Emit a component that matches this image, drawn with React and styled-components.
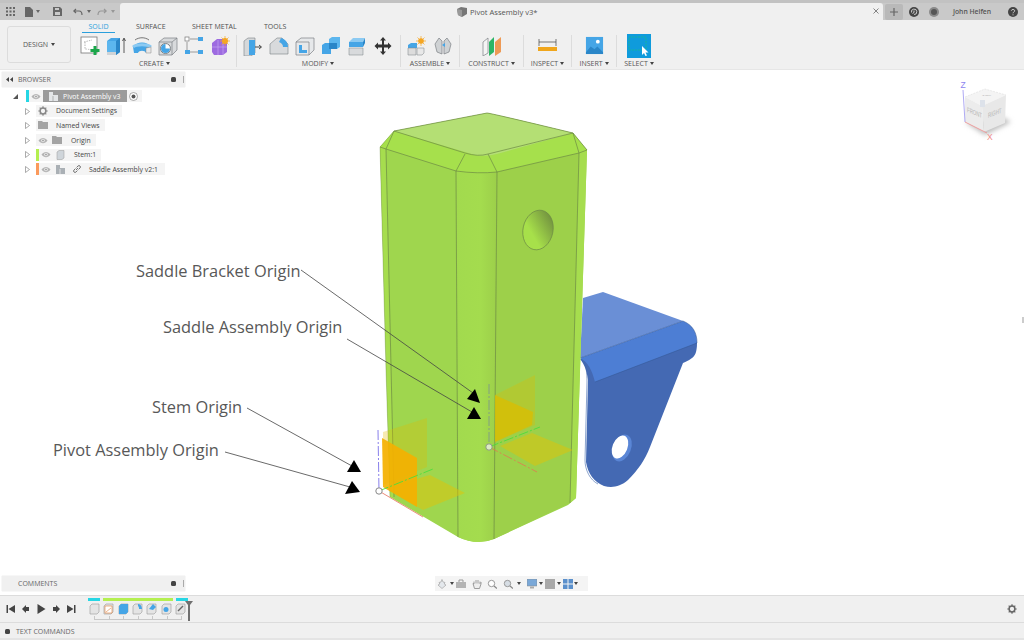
import React from 'react';
import styled, { createGlobalStyle } from 'styled-components';

const Global = createGlobalStyle`
  html, body { margin: 0; padding: 0; width: 1024px; height: 640px; overflow: hidden; background: #fff; }
  * { box-sizing: border-box; }
  body { font-family: "Open Sans", "Liberation Sans", sans-serif; color: #555; }
`;

const Page = styled.div`
  width: 1024px; height: 640px; display: flex; flex-direction: column; overflow: hidden;
`;

/* ---------- title bar ---------- */
const TitleBar = styled.header`
  height: 20px; background: #c9c9c9; border-top: 3px solid #c2c2c2; display: flex; align-items: stretch; flex: none;
`;
const QuickTools = styled.div`
  width: 120px; display: flex; align-items: center; padding-left: 5px; color: #666;
`;
const QuickBtn = styled.span`
  display: inline-flex; align-items: center; justify-content: center; width: ${p => p.$w || 12}px; margin-right: ${p => p.$mr || 0}px; opacity: ${p => p.$dim ? .5 : 1};
`;
const DocTab = styled.div`
  width: 763px; background: #f0f0f0; border-radius: 3px 3px 0 0; display: flex; align-items: center; position: relative; padding-left: 337px; font-size: 7.6px; color: #555; gap: 3px;
`;
const CloseTab = styled.span`
  position: absolute; right: 3px; top: 3px; width: 8px; height: 10px; display: flex; align-items: center; justify-content: center;
`;
const TopRight = styled.div`
  flex: 1; display: flex; align-items: center; padding-left: 2px; color: #555;
`;
const PlusBtn = styled.span`
  width: 18px; height: 16px; margin-top: 1px; background: #b9b9b9; border-radius: 2px; display: flex; align-items: center; justify-content: center; margin-right: 4px;
`;
const RoundBtn = styled.span`
  width: 14px; display: flex; justify-content: center; margin-right: ${p => p.$mr ?? 6}px;
`;
const UserName = styled.span`
  font-size: 6.8px; font-weight: 600; color: #555; width: 62px; margin-right: 5px; text-align: center; white-space: nowrap;
`;

/* ---------- ribbon ---------- */
const Ribbon = styled.div`
  height: 50px; flex: none; background: #f0f0f0; border-bottom: 1px solid #e6e6e6; display: flex;
`;
const DesignBtn = styled.div`
  width: 64px; height: 37px; margin: 6px 6px 0 7px; border: 1px solid #dcdcdc; border-radius: 3px; display: flex; align-items: center; justify-content: center; gap: 3px; font-size: 7px; color: #555; flex: none;
`;
const RibbonMain = styled.div`
  display: flex; flex-direction: column;
`;
const Tabs = styled.div`
  height: 14px; display: flex; align-items: flex-start; padding: 1px 0 0 5px;
`;
const Tab = styled.span`
  font-size: 7px; height: 12px; line-height: 11px; width: ${p => p.$w}px; margin-right: ${p => p.$mr}px; text-align: center; white-space: nowrap;
  color: ${p => p.$active ? '#2a9fdc' : '#4f4f4f'};
  border-bottom: ${p => p.$active ? '1px solid #2a9fdc' : 'none'};
`;
const Groups = styled.div`
  display: flex; height: 33px; margin-top: 1px;
`;
const Group = styled.div`
  width: ${p => p.$w}px; display: flex; flex-direction: column; align-items: center; border-right: ${p => p.$last ? 'none' : '1px solid #dcdcdc'}; height: 32px;
  padding: 0 ${p => p.$pr || 0}px 0 ${p => p.$pl || 0}px;
`;
const GroupIcons = styled.div`
  display: flex; flex: none; height: 21px; align-items: center; justify-content: center;
`;
const IconCell = styled.span`
  width: ${p => p.$w || 26}px; display: flex; justify-content: center;
`;
const GroupLabel = styled.span`
  font-size: 7px; color: #555; display: flex; flex: none; align-items: center; gap: 2px; height: 10px; margin-top: 2px; white-space: nowrap;
`;
const Caret = styled.i`
  display: inline-block; flex: none; width: 0; height: 0; border-left: ${p => p.$s || 3}px solid transparent; border-right: ${p => p.$s || 3}px solid transparent; border-top: ${p => (p.$s || 3) + 1}px solid ${p => p.$c || '#444'};
`;

/* ---------- viewport ---------- */
const Viewport = styled.main`
  flex: 1; position: relative; background: #fff; overflow: hidden;
`;
const Scene = styled.svg`
  position: absolute; left: 0; top: 0; width: 1024px; height: 525px; display: block;
`;
const Note = styled.text`
  font-family: "Open Sans", "Liberation Sans", sans-serif; font-size: 16.4px; fill: #585858;
`;
const CubeLabel = styled.text`
  font-family: "Liberation Sans", sans-serif; font-size: ${p => p.$fs || 7}px; fill: #b4b4b4;
`;
const AxisLabel = styled.text`
  font-family: "Liberation Sans", sans-serif; font-size: 8.5px; fill: ${p => p.$c};
`;
const Panel = styled.section`
  position: absolute; left: 2px; width: 183px; height: 15px; background: #f0f0f0; box-shadow: 0 0 1px #ccc; display: flex; align-items: center; font-size: 7px; color: #666; padding-left: ${p => p.$pl || 4}px;
  ${p => p.$bottom ? 'bottom: 4px;' : 'top: 2px;'}
`;
const PanelTitle = styled.span`
  margin-left: 4px;
`;
const PanelDot = styled.span`
  margin-left: auto; width: 5px; height: 5px; border-radius: 1.5px; background: #444; margin-right: 7px;
`;
const PanelGrip = styled.span`
  width: 1px; height: 7px; background: #aaa; margin-right: 1px;
`;
const Tree = styled.div`
  position: absolute; left: 0; top: 19px; display: flex; flex-direction: column; font-size: 6.9px; color: #444;
`;
const TreeRow = styled.div`
  height: 14.6px; display: flex; align-items: center; position: relative; padding-left: ${p => p.$pl}px;
`;
const Disclosure = styled.span`
  position: absolute; left: ${p => p.$x}px; top: 4px; display: flex;
`;
const Chip = styled.div`
  height: 12px; background: #f4f4f4; display: flex; align-items: center; width: ${p => p.$w}px; position: relative; white-space: nowrap;
`;
const ColorBar = styled.span`
  width: 3px; height: 12px; background: ${p => p.$c}; flex: none;
`;
const Slot = styled.span`
  width: ${p => p.$w}px; display: flex; justify-content: center; flex: none;
`;
const Selected = styled.span`
  height: 12px; width: 84px; background: #9b9b9b; color: #fff; display: flex; align-items: center; flex: none;
`;
const NavBar = styled.nav`
  position: absolute; left: 435px; bottom: 4px; width: 153px; height: 15px; background: #f4f4f4; display: flex; align-items: center; padding-left: 2px;
`;
const NavItem = styled.span`
  display: flex; align-items: center; margin-left: ${p => p.$ml || 0}px;
`;
const RightTick = styled.span`
  position: absolute; right: 0; top: 247px; width: 2px; height: 6px; background: #ccc;
`;

/* ---------- timeline ---------- */
const Timeline = styled.footer`
  height: 27px; flex: none; background: #f0f0f0; border-top: 1px solid #dcdcdc; display: flex; align-items: center; position: relative; padding-left: 3px;
`;
const PlayBtn = styled.span`
  width: 15px; display: flex; justify-content: center;
`;
const Steps = styled.div`
  margin-left: 10px; display: flex; flex-direction: column; width: 100px; margin-top: -1px;
`;
const Markers = styled.div`
  display: flex; gap: 3px; height: 4px; margin-bottom: 1px;
`;
const Marker = styled.span`
  height: 3px; width: ${p => p.$w}px; background: ${p => p.$c};
`;
const StepIcons = styled.div`
  display: flex; height: 12px; margin-left: -1px;
`;
const StepCell = styled.span`
  width: 14.6px; display: flex; justify-content: center;
`;
const Brackets = styled.div`
  height: 4px; margin: 1px 0 0 6px; width: 88px; display: flex; border-bottom: 1px solid #c8c8c8; border-right: 1px solid #c8c8c8;
`;
const BracketTick = styled.span`
  flex: 1; border-left: 1px solid #c8c8c8;
`;
const Playhead = styled.span`
  position: absolute; left: 185px; top: 5px; display: flex;
`;
const GearEnd = styled.span`
  position: absolute; right: 7px; top: 8px; display: flex;
`;
const Commands = styled.div`
  height: 18px; flex: none; background: #f0f0f0; border-top: 1px solid #dcdcdc; border-bottom: 2px solid #e4e4e4; display: flex; align-items: center; padding: 1px 0 0 5px; gap: 6px; font-size: 7px; color: #666;
`;
const CommandDot = styled.span`
  width: 5px; height: 5px; border-radius: 1.5px; background: #444;
`;

/* ---------- icons ---------- */
const Svg = ({ s = 20, w, h, vb, children }) => <svg width={w || s} height={h || s} viewBox={vb || '0 0 20 20'}>{children}</svg>;
const B = '#45a5e6', BD = '#2a86c8', GD = '#7b8084';

const Sketch = () => <Svg><rect x="1" y="1" width="16" height="16" fill="#fff" stroke="#777" strokeWidth=".8" /><path d="M4 6 L12 4 M5 6 L5 13 Q7 13 12 14" stroke="#999" strokeWidth=".7" fill="none" strokeDasharray="1.5 1" /><path d="M15 10v9M10.5 14.5h9" stroke="#1aa64a" strokeWidth="3" /></Svg>;
const Extrude = () => <Svg><path d="M1 5l4-3h9v14l-4 3H1z" fill={B} /><path d="M1 5h9v14H1z" fill="#5cb6ee" /><path d="M10 5l4-3v14l-4 3z" fill={BD} /><path d="M1 16h9v3H1z" fill="#cfd3d6" /><path d="M18 3v14M16.5 5L18 2l1.500 3" stroke="#333" strokeWidth=".8" fill="none" /></Svg>;
const Revolve = () => <Svg><path d="M1 11c3-6 15-6 18 0l-1 6h-4c-1-3-7-3-8 0H2z" fill={B} /><path d="M1 11c3-3 15-3 18 0" stroke="#8ccaf2" strokeWidth="3" fill="none" /><path d="M3 4c4-3 10-3 14 0" stroke="#555" strokeWidth=".8" fill="none" /><path d="M14 12l5-1v6h-5z" fill="#e8e8e8" stroke="#888" strokeWidth=".5" /></Svg>;
const Hole = () => <Svg><path d="M1 6l5-4h13v12l-5 5H1z" fill="#d8dadc" stroke={GD} strokeWidth=".7" /><path d="M1 6h13v13M14 6l5-4" stroke={GD} strokeWidth=".7" fill="none" /><circle cx="7.500" cy="12.500" r="5" fill="#fff" stroke={GD} /><path d="M7.500 8a4.500 4.500 0 1 0 4.500 4.500H7.500z" fill={B} /></Svg>;
const Pattern = () => <Svg><path d="M6 3h8M6 16h8M3 6v8" stroke="#777" strokeWidth=".7" /><rect x="1" y="1" width="4" height="4" fill="#fff" stroke="#777" strokeWidth=".7" /><rect x="14" y="1" width="5" height="4" fill={B} /><rect x="1" y="14" width="5" height="4" fill={B} /><rect x="14" y="14" width="5" height="4" fill={B} /></Svg>;
const Form = () => <Svg><path d="M2 7l5-4h10v13l-4 3H4l-2-3z" fill="#9d6be0" /><path d="M2 11h15M8 4v15M13 4v15" stroke="#c4a3f0" strokeWidth=".7" /><circle cx="15" cy="5" r="3" fill="#f5a623" /><path d="M15 0v10M10 5h10M11.500 1.500l7 7M18.500 1.500l-7 7" stroke="#f5a623" strokeWidth=".7" /></Svg>;
const PressPull = () => <Svg><path d="M1 5l4-3h7v15l-4 3H1z" fill="#d5d8da" stroke={GD} strokeWidth=".6" /><path d="M6 4h6v15H6z" fill={B} /><path d="M12 11h6M16 9l2.500 2-2.500 2" stroke="#333" strokeWidth=".9" fill="none" /></Svg>;
const Fillet = () => <Svg><path d="M1 8l7-6h5l6 6v10H1z" fill="#d8dadc" stroke={GD} strokeWidth=".6" /><path d="M12 2c4 1 7 4 7 9h-5c0-2-1-4-4-5z" fill={B} /></Svg>;
const Shell = () => <Svg><path d="M1 6l5-4h13v12l-5 5H1z" fill="#e6e8ea" stroke={GD} strokeWidth=".7" /><path d="M1 6h13v13" stroke={GD} strokeWidth=".7" fill="none" /><path d="M4 9h3v5h5v3H4z" fill={B} /></Svg>;
const Combine = () => <Svg><path d="M1 9l3-2h6v11H1z" fill={B} /><path d="M8 3l3-2h8v10l-3 2H8z" fill="#5cb6ee" /><path d="M8 7h8v6H8z" fill={BD} /></Svg>;
const Offset = () => <Svg><path d="M2 6l4-4h12l-2 4z" fill="#8ccaf2" /><path d="M2 6h14v5H2z" fill={B} /><path d="M2 12h14v7H2z" fill="#d8dadc" stroke={GD} strokeWidth=".5" /><path d="M16 6l2-4v5l-2 4z" fill={BD} /></Svg>;
const Move = () => <Svg><path d="M10 1l3 3.500h-2v4h4v-2l3.500 3.500-3.500 3.500v-2h-4v4h2L10 19l-3-3.500h2v-4H5v2L1.500 10 5 6.500v2h4v-4H7z" fill="#333" /></Svg>;
const NewComp = () => <Svg><path d="M1 9l3-2h6v5H1z" fill={B} /><path d="M1 12h8v7H1z" fill="#dcdcdc" stroke={GD} strokeWidth=".5" /><path d="M10 12h7v5l-2 2h-5z" fill="#e8e8e8" stroke={GD} strokeWidth=".5" /><circle cx="14" cy="5" r="2.800" fill="#f5a623" /><path d="M14 0v10M9 5h10M10.500 1.500l7 7M17.500 1.500l-7 7" stroke="#f5a623" strokeWidth=".7" /></Svg>;
const Joint = () => <Svg><path d="M2 8l4-6 3 3v13l-5-2z" fill="#cfd2d4" stroke={GD} strokeWidth=".7" /><path d="M18 8l-4-6-3 3v13l5-2z" fill="#cfd2d4" stroke={GD} strokeWidth=".7" /><path d="M9 9l3-2v4z" fill={B} /></Svg>;
const Construct = () => <Svg><path d="M1 6l5-4v15l-5 3z" fill="#f4f4f4" stroke={GD} strokeWidth=".7" /><path d="M7 6l5-5v15l-5 4z" fill="#2cb566" /><path d="M13 6l6-5v15l-6 4z" fill="#ee9a55" /></Svg>;
const Inspect = () => <Svg w={19} h={14} vb="0 0 19 14"><path d="M1 0v7M18 0v7M1 3h17" stroke="#444" strokeWidth=".7" /><rect y="8" width="19" height="4" fill="#f0a61c" /></Svg>;
const Insert = () => <Svg w={19} h={19}><rect x="1" y="1" width="18" height="18" fill={B} /><circle cx="13.500" cy="6" r="2" fill="#fff" /><path d="M1 17l5-6 4 3 3-3 6 6v2H1z" fill={BD} /></Svg>;
const Select = () => <Svg w={24} h={24} vb="0 0 24 24"><rect width="24" height="24" fill="#0f9bdc" /><rect x="2" y="3" width="17" height="13" fill="none" stroke="#16b3a0" strokeDasharray="2 1" /><path d="M15 12v9l2-2 1.500 3 1.500-.6-1.500-3h3z" fill="#fff" /></Svg>;

const Eye = () => <Svg w={10} h={7} vb="0 0 10 7"><path d="M.5 3.500C3 0 7 0 9.500 3.500 7 7 3 7 .5 3.500z" fill="#b4b4b4" /><circle cx="5" cy="3.500" r="1.700" fill="#f4f4f4" /><circle cx="5" cy="3.500" r=".9" fill="#999" /></Svg>;
const Folder = () => <Svg w={10} h={8} vb="0 0 10 8"><path d="M0 0h4l1 1h5v7H0z" fill="#a4a4a4" /></Svg>;
const GearI = ({ c = '#888', s = 10 }) => <Svg s={s} vb="0 0 10 10"><circle cx="5" cy="5" r="2.900" fill="none" stroke={c} strokeWidth="1.500" /><path d="M5 .3v2M5 7.700v2M.3 5h2M7.700 5h2M1.700 1.700l1.400 1.400M6.900 6.900l1.400 1.400M8.300 1.700L6.900 3.100M3.100 6.900L1.700 8.300" stroke={c} strokeWidth="1.200" /></Svg>;
const CubeI = () => <Svg w={9} h={10} vb="0 0 9 10"><path d="M1 2l2-1.500h5V8L6 9.500H1z" fill="#cfd5da" stroke="#999" strokeWidth=".5" /></Svg>;
const Asm = () => <Svg w={9} h={10} vb="0 0 9 10"><path d="M0 1h4v3h5v6H0z" fill="#aab0b5" /><path d="M4 5v5" stroke="#f4f4f4" strokeWidth=".7" /></Svg>;
const AsmW = () => <Svg w={9} h={10} vb="0 0 9 10"><path d="M0 1h4v3h5v6H0z" fill="#e4e6e8" /><path d="M4 5v5" stroke="#9b9b9b" strokeWidth=".7" /></Svg>;
const LinkI = () => <Svg s={8} vb="0 0 8 8"><path d="M3 5l2-2M2.500 3.500L1 5a1.300 1.300 0 0 0 2 2l1.500-1.500M5.500 4.500L7 3a1.300 1.300 0 0 0-2-2L3.500 2.500" fill="none" stroke="#555" strokeWidth=".8" /></Svg>;
const Tri = ({ c = '#888', down }) => <Svg w={5} h={7} vb="0 0 5 7">{down ? <path d="M0 6L5 1v5z" fill="#555" /> : <path d="M.5 .5L4.500 3.500.5 6.500z" fill="#fff" stroke={c} strokeWidth=".7" />}</Svg>;

const NavI = ({ children, w = 10 }) => <Svg w={w} h={10} vb={`0 0 ${w} 10`}>{children}</Svg>;

const ctl = '#444';
const playIcons = [
  <path key="0" d="M.5 1H2v8H.5zM9 1v8L2.500 5z" fill={ctl} />,
  <path key="1" d="M5 1v8L1 5zM5 3h3v4H5z" fill={ctl} />,
  <path key="2" d="M1.500 0L9.500 5 1.500 10z" fill={ctl} />,
  <path key="3" d="M5 1v8l4-4zM2 3h3v4H2z" fill={ctl} />,
  <path key="4" d="M8 1h1.500v8H8zM1 1v8l6.500-4z" fill={ctl} />,
];

const StepIcon = ({ kind }) => {
  const base = <path d="M1 3l2-2h7v8l-2 2H1z" fill="#e4e4e4" stroke="#999" strokeWidth=".6" />;
  const extra = {
    box: null,
    sketch: <path d="M2 3h7v7H2z M3 9l5-4" fill="#fff" stroke="#e0803a" strokeWidth=".6" />,
    ext: <path d="M1 3l2-2h7v8l-2 2H1z" fill={B} />,
    fil: <path d="M6 1c3 0 4 3 4 5H7c0-1 0-2-1-3z" fill={B} />,
    cham: <path d="M3 6l4-5 3 3-3 3z" fill={B} />,
    hole: <circle cx="5" cy="6.500" r="2.500" fill={B} />,
    link: <path d="M3 8l5-5" stroke="#666" strokeWidth="1.500" />,
  }[kind];
  return <Svg w={11} h={12} vb="0 0 11 12">{base}{extra}</Svg>;
};

const groups = [
  { w: 160, pr: 4, label: 'CREATE', icons: [Sketch, Extrude, Revolve, Hole, Pattern, Form] },
  { w: 164, pl: 3, pr: 4, label: 'MODIFY', icons: [PressPull, Fillet, Shell, Combine, Offset, Move] },
  { w: 59, label: 'ASSEMBLE', icons: [NewComp, Joint] },
  { w: 64, label: 'CONSTRUCT', icons: [Construct], cw: 40 },
  { w: 48, label: 'INSPECT', icons: [Inspect], cw: 30 },
  { w: 45, label: 'INSERT', icons: [Insert], cw: 30 },
  { w: 44, label: 'SELECT', icons: [Select], cw: 30, last: true },
];

const CubeTitle = () => <Svg w={10} h={10} vb="0 0 10 10"><path d="M0 2l4-2 6 1v6L5 10 1 8z" fill="#777" /><path d="M5 3v7L1 8 0 2z" fill="#999" /></Svg>;

function Model() {
  return (
    <g>
      <defs>
        <linearGradient id="hole" x1="0.8" y1="0" x2="0.3" y2="0.6">
          <stop offset="0" stopColor="#6f8d3f" />
          <stop offset="1" stopColor="#a7e04a" />
        </linearGradient>
        <linearGradient id="round" x1="0" y1="0" x2="1" y2="0">
          <stop offset="0" stopColor="#a2da4e" />
          <stop offset=".6" stopColor="#a4dc4e" />
          <stop offset="1" stopColor="#9ccf4a" />
        </linearGradient>
      </defs>

      {/* bracket */}
      <path d="M583 298L603 292L683 321L580 358Z" fill="#6a8fd6" />
      <path d="M580 359L683 325L697 343C697 352 695 356 692 358C688 361 685 362 683 363L650 447C645 460 638 470 628 480C620 487 612 488 604 486C594 482 588 474 586 462L588 380C587 372 585 365 580 359Z" fill="#4469b3" />
      <path d="M580 358L683 321C693 325 697 333 697 343L595 382C592 370 588 362 580 358Z" fill="#4d7ed4" />
      <path d="M584 362C586 366 587 372 587 382L585 460C585 470 590 480 598 484" fill="none" stroke="#3f68ac" strokeWidth=".6" />
      <path d="M580 358L683 321C693 325 697 333 697 343L595 382" fill="none" stroke="#33558e" strokeWidth=".5" />
      <ellipse cx="622" cy="448" rx="9" ry="14" transform="rotate(22 622 448)" fill="#5a86d6" />
      <ellipse cx="620" cy="447" rx="7.500" ry="12" transform="rotate(22 620 447)" fill="#fff" />

      {/* body */}
      <path d="M380 147L394 131L487 113Q490 113 573 133L587 150L580 370L576 498L568 505L494 539Q477 546 458 537L390 497L386 370Z" fill="#9fd64e" />
      <path d="M456 171L497 172L494 539Q477 546 458 537Z" fill="url(#round)" />
      <path d="M497 172L579 153L570 503L494 539Z" fill="#9dd04a" />
      <path d="M579 153L587 150L576 498L570 503Z" fill="#a6dd4e" />
      <path d="M380 147L386 149L394 497L390 497Z" fill="#a6dd4e" />
      <path d="M394 131L475 155Q487 157 497 154L573 133L587 150L579 153L497 172Q478 175 456 171L386 149L380 147Z" fill="#a6e04c" />
      <path d="M394 131L487 113Q490 113 573 133L497 154Q487 157 475 155Z" fill="#b4df74" />
      <g fill="none" stroke="#6d8a45" strokeWidth=".7">
        <path d="M394 131L487 113Q490 113 573 133L587 150" />
        <path d="M394 131L380 147L386 370L390 497" strokeOpacity=".5" />
        <path d="M394 131L465 153Q478 157 488 154L573 133" />
        <path d="M386 149L456 171Q478 174 497 172L579 153" />
        <path d="M380 147L386 149L394 497" />
        <path d="M456 171L458 537" />
        <path d="M497 172L494 539" />
        <path d="M579 153L570 503" />
        <path d="M465 154L456 171M488 154L497 172M394 131L386 149M573 133L579 153M587 150L579 153" />
      </g>
      <ellipse cx="538" cy="230" rx="15" ry="20" transform="rotate(12 538 230)" fill="url(#hole)" stroke="#6d8a45" strokeWidth=".7" />

      {/* origin planes */}
      <path d="M383 432L427 418V467L383 485Z" fill="#e2b800" fillOpacity=".3" />
      <path d="M384 488L430 475L465 493L423 510Z" fill="#e8c000" fillOpacity=".45" />
      <path d="M382 438L417 458L417 507L383 487Z" fill="#f5b000" fillOpacity=".9" />
      <path d="M495 395L535 375V425L495 442Z" fill="#e2b800" fillOpacity=".3" />
      <path d="M495 395L533 412L532 425L495 442Z" fill="#dcbc00" fillOpacity=".75" />
      <path d="M500 446L532 433L573 450L535 466Z" fill="#e8c000" fillOpacity=".45" />

      {/* axes */}
      <path d="M378 430L379 491" stroke="#7a70e8" strokeWidth=".9" strokeDasharray="10 2 2 2" />
      <path d="M379 491L433 469" stroke="#4cdc3c" strokeWidth=".9" strokeDasharray="10 2 2 2" />
      <path d="M379 491L423 517" stroke="#e8705a" strokeWidth=".8" />
      <circle cx="379" cy="491" r="3.200" fill="#fff" stroke="#888" strokeWidth="1" />
      <path d="M489 384L489 447" stroke="#7f9a8a" strokeWidth=".9" strokeDasharray="10 2 2 2" />
      <path d="M489 447L540 427" stroke="#4cdc3c" strokeWidth=".9" strokeDasharray="10 2 2 2" />
      <path d="M489 447L537 472" stroke="#e07a50" strokeWidth=".8" strokeDasharray="10 2 2 2" />
      <circle cx="489" cy="447" r="3.200" fill="#dcebc4" stroke="#8d9a80" strokeWidth="1" />
    </g>
  );
}

function Annotations() {
  return (
    <g>
      <g stroke="#444" strokeWidth=".8" fill="none">
        <path d="M301 270L473 393" />
        <path d="M347 339L472 412" />
        <path d="M247 408L352 466" />
        <path d="M225 452L350 487" />
      </g>
      <g fill="#000">
        <path d="M467 399L475 389L480 403Z" />
        <path d="M467 419L474 407L481 419Z" />
        <path d="M347 472L354 460L361 472Z" />
        <path d="M345 494L352 481L360 492Z" />
      </g>
      <Note x="136" y="277">Saddle Bracket Origin</Note>
      <Note x="163" y="333">Saddle Assembly Origin</Note>
      <Note x="152" y="413">Stem Origin</Note>
      <Note x="53" y="456">Pivot Assembly Origin</Note>
    </g>
  );
}

function ViewCube() {
  return (
    <g>
      <defs>
        <filter id="soft" x="-30%" y="-30%" width="160%" height="160%"><feGaussianBlur stdDeviation="2.500" /></filter>
      </defs>
      <path d="M965 122L985 135L1011 122L1000 116Z" fill="#bbb" filter="url(#soft)" />
      <path d="M965 97L985 89L1006 95L982 106Z" fill="#f4f4f4" />
      <path d="M965 97L982 106L984 132L965 122Z" fill="#ececec" />
      <path d="M982 106L1006 95L1005 123L984 132Z" fill="#e8e8e8" />
      <path d="M965 97L985 89L1006 95" fill="none" stroke="#ddd" strokeWidth=".6" strokeDasharray="2 1" />
      <rect x="980" y="100" width="5" height="7" fill="#dde2ea" />
      <CubeLabel transform="translate(967 112) skewY(22) scale(.62 1)">FRONT</CubeLabel>
      <CubeLabel transform="translate(988 118) skewY(-22) scale(.62 1)">RIGHT</CubeLabel>
      <CubeLabel $fs={5} transform="translate(982 96) scale(.9 .5)">TOP</CubeLabel>
      <path d="M963 90L965 122" stroke="#9a94f0" strokeWidth=".8" />
      <path d="M965 122L987 133" stroke="#ee8a8a" strokeWidth=".8" />
      <AxisLabel $c="#8d86f0" x="960.500" y="88">Z</AxisLabel>
      <AxisLabel $c="#f08a8a" x="987" y="140">X</AxisLabel>
    </g>
  );
}

export default function App() {
  return (
    <Page>
      <Global />
      <TitleBar>
        <QuickTools>
          <QuickBtn $w={11} $mr={8}><Svg s={9} vb="0 0 9 9"><path d="M0 0h2v2H0zM3.500 0h2v2h-2zM7 0h2v2H7zM0 3.500h2v2H0zM3.500 3.500h2v2h-2zM7 3.500h2v2H7zM0 7h2v2H0zM3.500 7h2v2h-2zM7 7h2v2H7z" fill="#666" /></Svg></QuickBtn>
          <QuickBtn $w={10}><Svg w={8} h={10} vb="0 0 8 10"><path d="M0 0h5l3 3v7H0z" fill="#666" /></Svg></QuickBtn>
          <QuickBtn $w={8} $mr={11}><Caret $s={2.500} $c="#666" /></QuickBtn>
          <QuickBtn $w={9} $mr={11}><Svg s={9} vb="0 0 9 9"><path d="M0 0h7l2 2v7H0z" fill="#666" /><path d="M2 1h4v2H2zM2 5h5v3H2z" fill="#c9c9c9" /></Svg></QuickBtn>
          <QuickBtn $w={10} $mr={2}><Svg s={10} vb="0 0 10 10"><path d="M3 2L.8 4 3 6M1 4h5c2 0 3 1.500 3 4" fill="none" stroke="#666" strokeWidth="1.200" /></Svg></QuickBtn>
          <QuickBtn $w={8} $mr={4}><Caret $s={2.500} $c="#666" /></QuickBtn>
          <QuickBtn $w={10} $mr={2} $dim><Svg s={10} vb="0 0 10 10"><path d="M7 2l2.200 2L7 6M9 4H4C2 4 1 5.500 1 8" fill="none" stroke="#666" strokeWidth="1.200" /></Svg></QuickBtn>
          <QuickBtn $w={8} $dim><Caret $s={2.500} $c="#666" /></QuickBtn>
        </QuickTools>
        <DocTab>
          <CubeTitle />
          <span>Pivot Assembly v3*</span>
          <CloseTab><Svg s={6} vb="0 0 6 6"><path d="M.5 .5l5 5M5.500 .5l-5 5" stroke="#777" strokeWidth=".9" /></Svg></CloseTab>
        </DocTab>
        <TopRight>
          <PlusBtn><Svg s={8} vb="0 0 8 8"><path d="M4 0v8M0 4h8" stroke="#666" strokeWidth="1.200" /></Svg></PlusBtn>
          <RoundBtn><Svg s={10} vb="0 0 10 10"><circle cx="5" cy="5" r="5" fill="#444" /><path d="M2.500 5.500a2.700 2.700 0 1 1 2.500 2M5 3.500v2l-1.500 1" fill="none" stroke="#ccc" strokeWidth="1" /></Svg></RoundBtn>
          <RoundBtn $mr={0}><Svg s={10} vb="0 0 10 10"><circle cx="5" cy="5" r="5" fill="#8a8a8a" /><circle cx="5" cy="5" r="3" fill="#555" /></Svg></RoundBtn>
          <UserName>John Helfen</UserName>
          <Svg s={10} vb="0 0 10 10"><circle cx="5" cy="5" r="5" fill="#444" /><path d="M3.300 3.700C3.500 2 6.700 2 6.700 3.800 6.700 5 5 5 5 6.300M5 7.300v1" fill="none" stroke="#ccc" strokeWidth="1" /></Svg>
        </TopRight>
      </TitleBar>

      <Ribbon>
        <DesignBtn>DESIGN <Caret $s={2.500} /></DesignBtn>
        <RibbonMain>
          <Tabs>
            <Tab $active $w={33} $mr={21}>SOLID</Tab>
            <Tab $w={29} $mr={27}>SURFACE</Tab>
            <Tab $w={44} $mr={28}>SHEET METAL</Tab>
            <Tab $w={22} $mr={0}>TOOLS</Tab>
          </Tabs>
          <Groups>
            {groups.map(g => (
              <Group key={g.label} $w={g.w} $last={g.last} $pl={g.pl} $pr={g.pr}>
                <GroupIcons>
                  {g.icons.map((I, i) => <IconCell key={i} $w={g.cw}><I /></IconCell>)}
                </GroupIcons>
                <GroupLabel>{g.label} <Caret $s={2} /></GroupLabel>
              </Group>
            ))}
          </Groups>
        </RibbonMain>
      </Ribbon>

      <Viewport>
        <Scene viewBox="0 70 1024 525">
          <Model />
          <Annotations />
          <ViewCube />
        </Scene>

        <Panel>
          <Svg w={8} h={5} vb="0 0 8 5"><path d="M0 2.500L3 0v5zM4 2.500L7 0v5z" fill="#444" /></Svg>
          <PanelTitle>BROWSER</PanelTitle>
          <PanelDot /><PanelGrip />
        </Panel>

        <Tree>
          <TreeRow $pl={26}>
            <Disclosure $x={13}><Tri down /></Disclosure>
            <Chip $w={116}>
              <ColorBar $c="#26d6e4" />
              <Slot $w={14}><Eye /></Slot>
              <Selected>
                <Slot $w={20}><AsmW /></Slot>
                <span>Pivot Assembly v3</span>
              </Selected>
              <Slot $w={12}><Svg s={9} vb="0 0 9 9"><circle cx="4.500" cy="4.500" r="4" fill="#fff" stroke="#888" strokeWidth=".7" /><circle cx="4.500" cy="4.500" r="2" fill="#555" /></Svg></Slot>
            </Chip>
          </TreeRow>
          <TreeRow $pl={36}>
            <Disclosure $x={25}><Tri /></Disclosure>
            <Chip $w={86}><Slot $w={13}><GearI /></Slot><Slot $w={7} /><span>Document Settings</span></Chip>
          </TreeRow>
          <TreeRow $pl={36}>
            <Disclosure $x={25}><Tri /></Disclosure>
            <Chip $w={69}><Slot $w={13}><Folder /></Slot><Slot $w={7} /><span>Named Views</span></Chip>
          </TreeRow>
          <TreeRow $pl={36}>
            <Disclosure $x={25}><Tri /></Disclosure>
            <Chip $w={60}><Slot $w={13}><Eye /></Slot><Slot $w={16}><Folder /></Slot><Slot $w={6} /><span>Origin</span></Chip>
          </TreeRow>
          <TreeRow $pl={36}>
            <Disclosure $x={25}><Tri /></Disclosure>
            <Chip $w={65}><ColorBar $c="#b4ef50" /><Slot $w={13}><Eye /></Slot><Slot $w={17}><CubeI /></Slot><Slot $w={5} /><span>Stem:1</span></Chip>
          </TreeRow>
          <TreeRow $pl={36}>
            <Disclosure $x={25}><Tri /></Disclosure>
            <Chip $w={129}><ColorBar $c="#fb9a5c" /><Slot $w={13}><Eye /></Slot><Slot $w={17}><Asm /></Slot><Slot $w={15}><LinkI /></Slot><Slot $w={5} /><span>Saddle Assembly v2:1</span></Chip>
          </TreeRow>
        </Tree>

        <RightTick />

        <Panel $bottom $pl={16}>
          COMMENTS
          <PanelDot /><PanelGrip />
        </Panel>

        <NavBar>
          <NavItem><NavI><path d="M5 .5l1 2.500 2 .5-.8 1.500L9 6 5 9.500 1 6l1.800-1L2 3.500 4 3z" fill="#e4e8ec" stroke="#999" strokeWidth=".6" /></NavI></NavItem>
          <NavItem $ml={3}><Caret $s={2.500} /></NavItem>
          <NavItem $ml={2}><NavI><path d="M0 3h10v6H0z" fill="#b4b4b4" /><path d="M3 3V1h4v2" fill="none" stroke="#999" /></NavI></NavItem>
          <NavItem $ml={6}><NavI><path d="M2 5V2.500M4 4.500V1M6 4.500V1M8 5V2.500M2 5L1 4.500 2.500 9.500h5L9 5V3" fill="#eee" stroke="#888" strokeWidth=".8" /></NavI></NavItem>
          <NavItem $ml={5}><NavI><circle cx="4.500" cy="4.500" r="3.200" fill="#fff" stroke="#999" /><path d="M7 7l3 2.500" stroke="#888" strokeWidth="1.300" /></NavI></NavItem>
          <NavItem $ml={6}><NavI><circle cx="4.500" cy="4.500" r="3.200" fill="#d6dde4" stroke="#999" /><path d="M7 7l3 2.500" stroke="#888" strokeWidth="1.300" /></NavI></NavItem>
          <NavItem $ml={4}><Caret $s={2.500} /></NavItem>
          <NavItem $ml={6}><NavI><path d="M0 0h10v7H0z" fill="#7aa8d8" stroke="#888" strokeWidth=".5" /><path d="M3 9.500h4v-2H3z" fill="#aaa" /></NavI></NavItem>
          <NavItem $ml={2}><Caret $s={2.500} /></NavItem>
          <NavItem $ml={2}><NavI><rect width="10" height="10" fill="#a8a8a8" /></NavI></NavItem>
          <NavItem $ml={2}><Caret $s={2.500} /></NavItem>
          <NavItem $ml={2}><NavI><path d="M0 0h4.500v4.500H0zM5.500 0H10v4.500H5.500zM0 5.500h4.500V10H0zM5.500 5.500H10V10H5.500z" fill="#5b90cc" /></NavI></NavItem>
          <NavItem $ml={1}><Caret $s={2.500} /></NavItem>
        </NavBar>
      </Viewport>

      <Timeline>
        {playIcons.map((p, i) => <PlayBtn key={i}><NavI>{p}</NavI></PlayBtn>)}
        <Steps>
          <Markers>
            <Marker $w={12} $c="#26d6e4" />
            <Marker $w={70} $c="#b4ef50" />
            <Marker $w={12} $c="#26d6e4" />
          </Markers>
          <StepIcons>
            {['box', 'sketch', 'ext', 'fil', 'cham', 'hole', 'link'].map(k => <StepCell key={k}><StepIcon kind={k} /></StepCell>)}
          </StepIcons>
          <Brackets>{[0, 1, 2, 3, 4, 5].map(i => <BracketTick key={i} />)}</Brackets>
        </Steps>
        <Playhead>
          <Svg w={8} h={20} vb="0 0 8 20"><path d="M0 0h8L5 4v16H3V4z" fill="#6f6f6f" /></Svg>
        </Playhead>
        <GearEnd><GearI c="#666" /></GearEnd>
      </Timeline>
      <Commands><CommandDot /> TEXT COMMANDS</Commands>
    </Page>
  );
}
